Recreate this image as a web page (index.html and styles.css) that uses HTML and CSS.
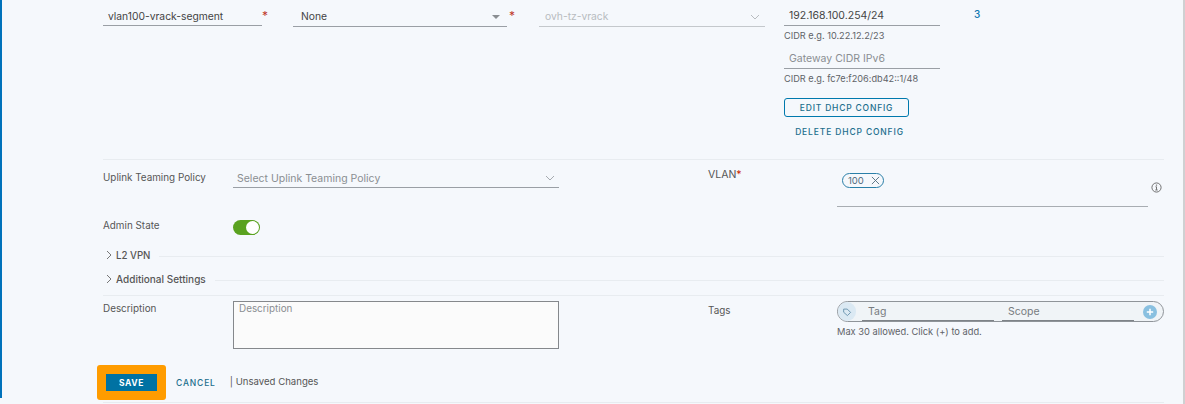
FILE: index.html
```html
<!DOCTYPE html>
<html lang="en">
<head>
<meta charset="utf-8">
<title>Segment</title>
<link rel="stylesheet" href="styles.css">
</head>
<body>
<main class="panel">
  <section class="row-top">
    <div class="cell cell-name">
      <div class="field field-name"><span class="val">vlan100-vrack-segment</span></div>
      <span class="star star-a">*</span>
    </div>
    <div class="cell cell-none">
      <div class="field field-none"><span class="val">None</span><i class="tri"></i></div>
      <span class="star star-b">*</span>
    </div>
    <div class="cell">
      <div class="field field-tz"><span class="val dim">ovh-tz-vrack</span>
        <svg class="chev" viewBox="0 0 10 6" width="10" height="6"><path d="M1 1l4 4 4-4" fill="none" stroke="#b8bcc0" stroke-width="1"/></svg>
      </div>
    </div>
    <div class="stack">
      <div class="field field-gw"><span class="val">192.168.100.254/24</span></div>
      <div class="hint">CIDR e.g. 10.22.12.2/23</div>
      <div class="field field-gw gw6"><span class="val ph">Gateway CIDR IPv6</span></div>
      <div class="hint">CIDR e.g. fc7e:f206:db42::1/48</div>
      <button class="btn-outline">EDIT DHCP CONFIG</button>
      <button class="btn-link">DELETE DHCP CONFIG</button>
    </div>
    <a class="count">3</a>
  </section>

  <section class="row-uplink">
    <div class="label label-up">Uplink Teaming Policy</div>
    <div class="field field-up"><span class="ph">Select Uplink Teaming Policy</span>
      <svg class="chev" viewBox="0 0 10 6" width="10" height="6"><path d="M1 1l4 4 4-4" fill="none" stroke="#a6abb0" stroke-width="1"/></svg>
    </div>
    <div class="label label-vlan">VLAN<span class="req">*</span></div>
    <div class="vlan">
      <div class="vlan-box"><span class="chip">100<svg viewBox="0 0 8 8" width="9" height="9"><path d="M.8.8l6.4 6.4M7.2.8L.8 7.2" stroke="#4f6b7c" stroke-width=".8" fill="none"/></svg></span></div>
      <svg class="info" viewBox="0 0 12 12" width="11" height="11"><circle cx="6" cy="6" r="5" fill="none" stroke="#666" stroke-width="1"/><path d="M6 5.2v3.300M4.700 8.700h2.600M4.900 5.200H6" stroke="#666" stroke-width="1" fill="none"/><circle cx="6" cy="3.400" r=".8" fill="#666"/></svg>
    </div>
  </section>

  <section class="row-admin">
    <div class="label">Admin State</div>
    <span class="toggle"><i></i></span>
  </section>

  <section class="expander exp-l2">
    <svg viewBox="0 0 6 10" width="6" height="10"><path d="M1 1l4 4-4 4" fill="none" stroke="#777" stroke-width="1"/></svg>
    <span class="exp-title">L2 VPN</span><span class="rule"></span>
  </section>
  <section class="expander exp-add">
    <svg viewBox="0 0 6 10" width="6" height="10"><path d="M1 1l4 4-4 4" fill="none" stroke="#777" stroke-width="1"/></svg>
    <span class="exp-title">Additional Settings</span><span class="rule"></span>
  </section>

  <section class="row-desc">
    <div class="label label-desc">Description</div>
    <div class="textarea">Description</div>
    <div class="label label-tags">Tags</div>
    <div class="tags">
      <div class="pill">
        <span class="tag-ico"><svg viewBox="0 0 12 12" width="10" height="10"><path d="M2 2.500h4.300l4 4-3.800 3.800-4.500-4z" fill="none" stroke="#4f7f9e" stroke-width=".9"/></svg></span>
        <span class="tag-in">Tag</span>
        <span class="tag-in">Scope</span>
        <span class="plus"><svg viewBox="0 0 8 8" width="8" height="8"><path d="M4 .8v6.400M.8 4h6.400" stroke="#fff" stroke-width="1.500"/></svg></span>
      </div>
      <div class="hint hint-tags">Max 30 allowed. Click (+) to add.</div>
    </div>
  </section>

  <section class="row-actions">
    <span class="save-ring"><button class="btn-save">SAVE</button></span>
    <button class="btn-cancel">CANCEL</button>
    <span class="unsaved">| Unsaved Changes</span>
  </section>
  <div class="end-rule"></div>
</main>
</body>
</html>
```
FILE: styles.css
```css
* { box-sizing: border-box; }
html, body { margin: 0; padding: 0; }
body {
  width: 1185px;
  height: 404px;
  overflow: hidden;
  background: #f5f8fc;
  font-family: "Inter", "Liberation Sans", sans-serif;
  color: #565656;
  font-size: 10px;
}
.panel {
  position: relative;
  width: 1185px;
  height: 404px;
  padding: 0 19px 0 103px;
  border-right: 2px solid #cfd0d2;
}
.panel::before {
  content: "";
  position: absolute;
  left: 0;
  top: 0;
  width: 2px;
  height: 398px;
  background: #0072bb;
}
.row-top {
  height: 160px;
  border-bottom: 1px solid #e8ecf0;
  display: grid;
  grid-template-columns: 190px 246px 245px 190px auto;
  align-items: start;
}
.cell { display: flex; }
.field {
  position: relative;
  display: flex;
  align-items: center;
  border-bottom: 1px solid #9a9fa5;
  font-size: 10.3px;
  color: #444;
}
.val { white-space: nowrap; }
.field-name { width: 159px; height: 26px; padding: 6px 0 0 5px; }
.field-none { width: 214px; height: 27px; padding: 6px 0 0 8px; }
.field-tz { width: 226px; height: 27px; padding: 6px 0 0 6px; border-color: #c4c8cc; }
.dim { color: #b8bcc0; }
.ph { color: #8a8e92; }
.star { color: #c0392b; font-size: 12px; line-height: 12px; margin: 10px 0 0 2px; }
.star-a { margin-left: 0; }
.tri {
  position: absolute;
  right: 7px;
  top: 15px;
  border: 4px solid transparent;
  border-top: 4px solid #8a8e92;
  border-bottom: 0;
}
.chev { position: absolute; right: 5px; top: 14px; }
.stack { display: flex; flex-direction: column; align-items: flex-start; }
.field-gw { width: 156px; height: 26px; padding: 5px 0 0 5px; font-size: 10.5px; }
.gw6 { height: 27px; padding: 7px 0 0 5px; }
.hint { font-size: 9.2px; line-height: 12px; margin-top: 4px; color: #5f6368; white-space: nowrap; }
.btn-outline {
  width: 125px;
  height: 19px;
  margin-top: 13px;
  padding: 0;
  border: 1px solid #0079ad;
  border-radius: 3px;
  background: transparent;
  font: 500 8.5px "Inter", "Liberation Sans", sans-serif;
  letter-spacing: .8px;
  color: #1b6e8c;
}
.btn-link {
  width: 125px;
  height: 12px;
  margin-top: 9px;
  padding: 0 0 0 6px;
  border: 0;
  background: none;
  font: 500 8.5px "Inter", "Liberation Sans", sans-serif;
  letter-spacing: .85px;
  color: #1b6e8c;
  text-align: center;
  white-space: nowrap;
}
.count { margin-top: 8px; line-height: 13px; color: #0f77b0; font-size: 10px; font-weight: 500; }

.row-uplink {
  display: grid;
  grid-template-columns: 130px 475px 129px 1fr;
  height: 51px;
  align-items: start;
}
.label { font-size: 9.9px; color: #565656; line-height: 14px; white-space: nowrap; }
.label-up { margin-top: 10px; }
.field-up { width: 326px; height: 28px; padding: 10px 0 0 4px; font-size: 10.5px; }
.field-up .chev { right: 4px; top: 15px; }
.label-vlan { margin-top: 8px; font-size: 10.5px; }
.req { color: #c92100; }
.vlan { position: relative; }
.vlan-box { width: 311px; height: 47px; border-bottom: 1px solid #a8adb2; padding: 13px 0 0 5px; }
.chip {
  display: inline-flex;
  align-items: center;
  gap: 7px;
  width: 42px;
  height: 15px;
  padding-left: 5px;
  border: 1px solid #2a7fa8;
  border-radius: 8px;
  font-size: 9.5px;
  color: #4f6b7c;
}
.info { position: absolute; left: 314px; top: 22px; }

.row-admin { display: flex; align-items: center; height: 34px; padding-bottom: 2px; }
.row-admin .label { width: 130px; padding-bottom: 4px; }
.toggle {
  position: relative;
  display: block;
  width: 27px;
  height: 15px;
  border-radius: 8px;
  background: #5aa220;
}
.toggle i {
  position: absolute;
  right: 1px;
  top: 1px;
  width: 13px;
  height: 13px;
  border-radius: 50%;
  background: #fff;
}
.expander { display: flex; align-items: center; gap: 4px; height: 24px; padding-left: 3px; }
.exp-title { font-size: 10px; font-weight: 500; color: #565656; white-space: nowrap; }
.exp-l2 .exp-title { font-size: 9.7px; }
.rule { flex: 1; height: 1px; background: #e8ecf0; margin: 2px 0 0 5px; }
.exp-l2 { margin-top: -2px; }
.row-desc {
  display: grid;
  grid-template-columns: 130px 475px 129px 1fr;
  align-items: start;
  height: 70px;
  margin-top: 4px;
  border-top: 1px solid #e8ecf0;
  padding-top: 5px;
}
.label-tags { margin-top: 2px; }
.textarea {
  width: 326px;
  height: 48px;
  border: 1px solid #85888c;
  background: #fbfbfb;
  padding: 0 5px;
  font-size: 9.9px;
  line-height: 12px;
  color: #8a8e92;
}
.pill {
  display: flex;
  align-items: center;
  width: 327px;
  height: 21px;
  border: 1px solid #8f9499;
  border-radius: 11px;
  background: #f0f4f7;
}
.tag-ico {
  display: flex;
  align-items: center;
  justify-content: center;
  width: 18px;
  height: 19px;
  border-radius: 10px;
  background: #dbe9f3;
}
.tag-in {
  width: 132px;
  height: 18px;
  margin-left: 6px;
  padding: 2px 0 0 6px;
  border-bottom: 1px solid #7e8388;
  font-size: 10.5px;
  line-height: 14px;
  color: #777b80;
}
.tag-in + .tag-in { margin-left: 8px; }
.plus {
  display: flex;
  align-items: center;
  justify-content: center;
  width: 14px;
  height: 14px;
  margin-left: 9px;
  border-radius: 50%;
  background: #89c0e0;
}
.hint-tags { margin-top: 4px; font-size: 9.3px; }

.row-actions { display: flex; align-items: flex-start; height: 37px; margin-left: -6px; }
.save-ring {
  display: flex;
  align-items: center;
  justify-content: center;
  width: 69px;
  height: 35px;
  border-radius: 3px;
  background: #ff9c00;
}
.btn-save {
  width: 51px;
  height: 17px;
  padding: 0;
  border: 0;
  background: #0072a3;
  color: #fff;
  font: 700 8.5px "Inter", "Liberation Sans", sans-serif;
  letter-spacing: .6px;
}
.btn-cancel {
  margin: 13px 0 0 10px;
  padding: 0;
  border: 0;
  background: none;
  font: 500 8.5px "Inter", "Liberation Sans", sans-serif;
  letter-spacing: .85px;
  color: #1b6e8c;
}
.unsaved { margin: 11px 0 0 14px; font-size: 9.6px; color: #565656; white-space: nowrap; }
.end-rule { height: 1px; background: #e8ecf0; }
```
